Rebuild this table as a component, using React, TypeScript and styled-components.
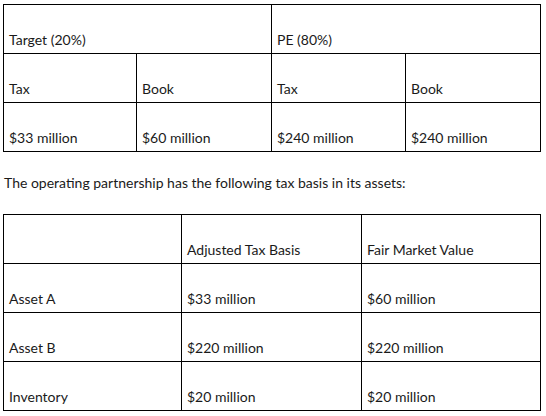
import React from 'react';
import styled, { createGlobalStyle } from 'styled-components';

const GlobalStyle = createGlobalStyle`
  body {
    margin: 0;
    background: #fff;
    font-family: Lato, "Liberation Sans", sans-serif;
    color: #1a1a1a;
  }
`;

const Page = styled.div`
  width: 538px;
  padding: 4px 0 0 3px;
`;

const Grid = styled.div<{ columns: string }>`
  display: grid;
  grid-template-columns: ${props => props.columns};
  grid-auto-rows: 49px;
  border-top: 1px solid #000;
  border-left: 1px solid #000;
  box-sizing: border-box;
  width: 538px;
`;

const Cell = styled.div<{ span?: number }>`
  grid-column: span ${props => props.span || 1};
  border-right: 1px solid #000;
  border-bottom: 1px solid #000;
  display: flex;
  align-items: flex-end;
  padding: 0 5px 5px;
  font-size: 14px;
  line-height: 17px;
  white-space: nowrap;
`;

const Note = styled.p`
  margin: 0;
  padding: 22px 0 0 1px;
  height: 40px;
  font-size: 14px;
  line-height: 17px;
`;

const ownership = [
  ['Tax', 'Book', 'Tax', 'Book'],
  ['$33 million', '$60 million', '$240 million', '$240 million'],
];

const assets = [
  ['', 'Adjusted Tax Basis', 'Fair Market Value'],
  ['Asset A', '$33 million', '$60 million'],
  ['Asset B', '$220 million', '$220 million'],
  ['Inventory', '$20 million', '$20 million'],
];

const App: React.FC = () => (
  <>
    <GlobalStyle />
    <Page>
      <Grid columns="133px 135px 134px 135px">
        <Cell span={2}>Target (20%)</Cell>
        <Cell span={2}>PE (80%)</Cell>
        {ownership.map((row, i) =>
          row.map((c, j) => <Cell key={`${i}-${j}`}>{c}</Cell>)
        )}
      </Grid>
      <Note>The operating partnership has the following tax basis in its assets:</Note>
      <Grid columns="178px 180px 179px">
        {assets.map((row, i) =>
          row.map((c, j) => <Cell key={`${i}-${j}`}>{c}</Cell>)
        )}
      </Grid>
    </Page>
  </>
);

export default App;
